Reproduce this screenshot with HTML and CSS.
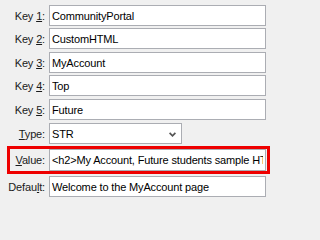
FILE: index.html
```html
<!DOCTYPE html>
<html>
<head>
<meta charset="utf-8">
<link rel="stylesheet" href="styles.css">
</head>
<body>
<div class="form">
  <div class="row r1"><label class="label">Key <u>1</u>:</label><input class="field" type="text" value="CommunityPortal"></div>
  <div class="row r2"><label class="label">Key <u>2</u>:</label><input class="field" type="text" value="CustomHTML"></div>
  <div class="row r3"><label class="label">Key <u>3</u>:</label><input class="field" type="text" value="MyAccount"></div>
  <div class="row r4"><label class="label">Key <u>4</u>:</label><input class="field" type="text" value="Top"></div>
  <div class="row r5"><label class="label">Key <u>5</u>:</label><input class="field" type="text" value="Future"></div>
  <div class="row r6"><label class="label"><u>T</u>ype:</label>
    <div class="combo"><span>STR</span>
      <svg class="chev" width="7" height="5" viewBox="0 0 7 5"><path d="M0.6 0.8 L3.5 3.8 L6.4 0.8" fill="none" stroke="#555" stroke-width="1.7"/></svg>
    </div>
  </div>
  <div class="row highlight"><label class="label short"><u>V</u>alue:</label><input class="field tall" type="text" value="&lt;h2&gt;My Account, Future students sample HTML&lt;/h2&gt;"></div>
  <div class="row r8"><label class="label">Defau<u>l</u>t:</label><input class="field" type="text" value="Welcome to the MyAccount page"></div>
</div>
</body>
</html>
```
FILE: styles.css
```css
html, body {
  margin: 0;
  padding: 0;
  background: #f0f0f0;
  width: 271px;
  height: 202px;
  overflow: hidden;
}
body {
  font-family: "Liberation Sans", Arial, sans-serif;
  font-size: 11px;
  letter-spacing: -0.15px;
  color: #000;
}
.form {
  padding-top: 5px;
}
.row {
  display: flex;
  align-items: center;
  height: 21px;
}
.r1 { margin-bottom: 2px; }
.r2 { margin-bottom: 3px; }
.r3 { margin-bottom: 2px; }
.r4 { margin-bottom: 3px; }
.r5 { margin-bottom: 3px; }
.r6 { margin-bottom: 2px; }
.label {
  width: 45px;
  margin-right: 4px;
  text-align: right;
  color: #1a1a1a;
  white-space: nowrap;
  flex: none;
}
.label.short {
  width: 35px;
}
.field {
  box-sizing: border-box;
  width: 217px;
  height: 21px;
  margin: 0;
  border: 1px solid #abadb3;
  background: #fff;
  padding: 0 2px;
  font-family: inherit;
  font-size: 11px;
  letter-spacing: -0.15px;
  color: #000;
  outline: none;
  flex: none;
}
.field.tall {
  height: 22px;
}
.combo {
  box-sizing: border-box;
  width: 133px;
  height: 21px;
  border: 1px solid #abadb3;
  background: #fff;
  padding: 0 5px 0 2px;
  display: flex;
  align-items: center;
  justify-content: space-between;
}
.chev {
  display: block;
  margin-top: 1px;
}
.highlight {
  box-sizing: border-box;
  height: 28px;
  width: 263px;
  margin-left: 7px;
  margin-bottom: 2px;
  border: 3px solid #ee0000;
}
```
